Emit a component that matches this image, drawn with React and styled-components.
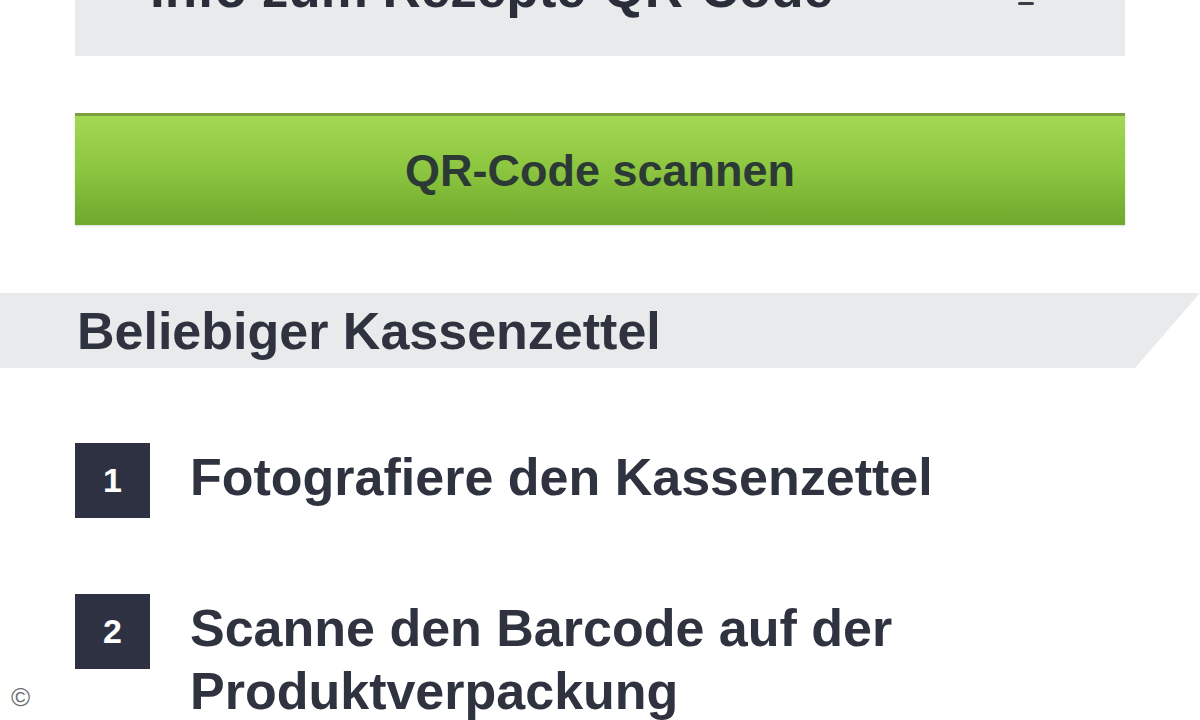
import React from 'react';
import styled, { createGlobalStyle } from 'styled-components';

const Global = createGlobalStyle`
  html, body {
    margin: 0;
    padding: 0;
    background: #fff;
    overflow: hidden;
  }
  body {
    font-family: "Liberation Sans", Arial, sans-serif;
    color: #2f3340;
  }
`;

const Page = styled.div`
  width: 1200px;
  height: 720px;
  overflow: hidden;
  position: relative;
`;

const Content = styled.div`
  display: flex;
  flex-direction: column;
  margin-top: -58px;
`;

const InfoCard = styled.div`
  margin: 0 75px;
  background: #e8eaec;
  padding: 17px 91px 37px 75px;
  display: flex;
  align-items: flex-end;
  justify-content: space-between;
`;

const InfoTitle = styled.div`
  font-size: 53px;
  line-height: 60px;
  font-weight: 700;
  color: #2a2e3a;
`;

const MenuIcon = styled.svg`
  display: block;
  margin-bottom: 13px;
`;

const ScanButton = styled.button`
  margin: 57px 75px 0;
  height: 112px;
  border: none;
  border-top: 3px solid #7d9f42;
  background: linear-gradient(to bottom, #a3d853 0%, #8cc53f 50%, #6fa82c 100%);
  box-shadow: 0 1px 2px rgba(0, 0, 0, 0.15);
  font-family: "Liberation Sans", Arial, sans-serif;
  font-size: 45px;
  font-weight: 700;
  color: #2c3a36;
  display: flex;
  align-items: center;
  justify-content: center;
  padding: 0;
`;

const SectionBand = styled.div`
  margin-top: 68px;
  height: 75px;
  background: #e8eaec;
  clip-path: polygon(0 0, 100% 0, 1135px 100%, 0 100%);
  display: flex;
  align-items: center;
  padding-left: 77px;
`;

const SectionTitle = styled.h2`
  margin: 0;
  font-size: 52px;
  line-height: 60px;
  font-weight: 700;
  color: #2f3340;
`;

const Steps = styled.ol`
  list-style: none;
  margin: 75px 0 0;
  padding: 0 75px;
  display: flex;
  flex-direction: column;
  gap: 76px;
`;

const Step = styled.li`
  display: flex;
  align-items: flex-start;
  gap: 40px;
`;

const StepNumber = styled.span`
  flex: 0 0 75px;
  height: 75px;
  background: #2e3142;
  color: #fff;
  font-size: 34px;
  font-weight: 700;
  display: flex;
  align-items: center;
  justify-content: center;
`;

const StepText = styled.span`
  padding-top: 3px;
  font-size: 52px;
  line-height: 63px;
  font-weight: 700;
  color: #2f3340;
  max-width: 760px;
`;

const Copyright = styled.span`
  position: absolute;
  left: 11px;
  top: 682px;
  font-size: 26px;
  line-height: 30px;
  color: #6e6e6e;
  text-shadow: 0 0 3px #fff, 0 0 4px #fff;
`;

export default function App() {
  return (
    <Page>
      <Global />
      <Content>
        <InfoCard>
          <InfoTitle>Info zum Rezepte-QR-Code</InfoTitle>
          <MenuIcon width="16" height="30" viewBox="0 0 16 30">
            <rect x="0" y="2" width="16" height="3" rx="1.5" fill="#3a3d48" />
            <rect x="0" y="14" width="16" height="3" rx="1.5" fill="#3a3d48" />
            <rect x="0" y="26" width="16" height="3" rx="1.5" fill="#3a3d48" />
          </MenuIcon>
        </InfoCard>
        <ScanButton>QR-Code scannen</ScanButton>
        <SectionBand>
          <SectionTitle>Beliebiger Kassenzettel</SectionTitle>
        </SectionBand>
        <Steps>
          <Step>
            <StepNumber>1</StepNumber>
            <StepText>Fotografiere den Kassenzettel</StepText>
          </Step>
          <Step>
            <StepNumber>2</StepNumber>
            <StepText>Scanne den Barcode auf der Produktverpackung</StepText>
          </Step>
        </Steps>
      </Content>
      <Copyright>©</Copyright>
    </Page>
  );
}
